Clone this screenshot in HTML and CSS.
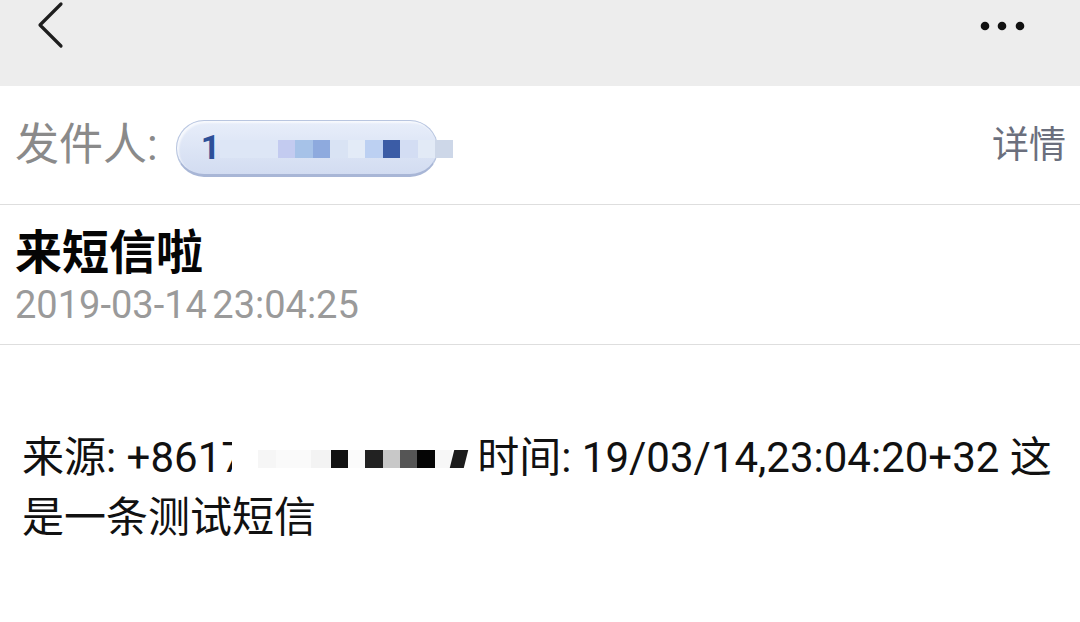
FILE: index.html
```html
<!DOCTYPE html>
<html lang="zh-CN">
<head>
<meta charset="utf-8">
<title>短信</title>
<link rel="stylesheet" href="styles.css">
</head>
<body>
<div class="page">
  <header class="topbar">
    <svg class="back" width="40" height="50" viewBox="0 0 40 50">
      <polyline points="24,4 3,25 24,46" fill="none" stroke="#1e1e1e" stroke-width="3.2" stroke-linecap="round" stroke-linejoin="round"/>
    </svg>
    <svg class="more" width="50" height="12" viewBox="0 0 50 12">
      <circle cx="5" cy="6" r="4.3" fill="#111"/>
      <circle cx="22" cy="6" r="4.3" fill="#111"/>
      <circle cx="40" cy="6" r="4.3" fill="#111"/>
    </svg>
  </header>

  <section class="sender">
    <span class="label">发件人:</span>
    <span class="chip">
      <span class="chip-num">1</span>
      <span class="blur blur-chip">
        <i style="width:58px;background:#dde6f6"></i>
        <i style="width:17px;background:#c3cbf0"></i>
        <i style="width:18px;background:#a6c2e8"></i>
        <i style="width:17px;background:#8eaade"></i>
        <i style="width:18px;background:#d9e3f4"></i>
        <i style="width:17px;background:#e3ebf7"></i>
        <i style="width:18px;background:#bcd0f2"></i>
        <i style="width:17px;background:#3b5ca6"></i>
        <i style="width:18px;background:#d3ddf3"></i>
        <i style="width:17px;background:#e2eaf6"></i>
        <i style="width:18px;background:#cdd7e8"></i>
      </span>
    </span>
    <span class="detail">详情</span>
  </section>

  <section class="subject">
    <h1 class="title">来短信啦</h1>
    <div class="date">2019-03-14 23:04:25</div>
  </section>

  <section class="body">
    <p class="msg">来源: +861<span class="cut">7</span><span class="blur blur-text"><i style="width:26px;background:#fff"></i><i style="width:18px;background:#f6f6f6"></i><i style="width:35px;background:#fafafa"></i><i style="width:20px;background:#f3f3f3"></i><i style="width:17px;background:#111"></i><i style="width:17px;background:#fbfbfb"></i><i style="width:18px;background:#222"></i><i style="width:17px;background:#c8c8c8"></i><i style="width:17px;background:#555"></i><i style="width:18px;background:#050505"></i><i style="width:17px;background:#f7f7f7"></i><i class="slant" style="width:14px;background:#1c1c1c"></i></span>时间: 19/03/14,23:04:20+32 这是一条测试短信</p>
  </section>
</div>
</body>
</html>
```

FILE: styles.css
```css
html, body {
  margin: 0;
  padding: 0;
  background: #ffffff;
}

body {
  width: 1080px;
  height: 622px;
  overflow: hidden;
  font-family: Roboto, "Noto Sans CJK SC", sans-serif;
}

.page {
  display: flex;
  flex-direction: column;
}

.topbar {
  height: 86px;
  background: #ededed;
  display: flex;
  align-items: flex-start;
  justify-content: space-between;
  padding: 0 50px 0 37px;
}

.back {
  display: block;
  margin-top: 0;
}

.more {
  display: block;
  margin-top: 20px;
}

.sender {
  height: 118px;
  border-bottom: 1px solid #dedede;
  display: flex;
  align-items: center;
  padding: 0 14px 0 15px;
}

.label {
  font-size: 44px;
  color: #8a8a8a;
  margin-right: 18px;
  line-height: 1;
}

.chip {
  height: 57px;
  width: 262px;
  box-sizing: border-box;
  border-radius: 28px;
  background: linear-gradient(#e8eefa, #d2dcf1);
  border: 1px solid #b9c6e0;
  border-bottom: 3px solid #a8b6d6;
  box-shadow: inset 2px 2px 2px rgba(255,255,255,0.7);
  display: flex;
  align-items: center;
  padding-left: 24px;
  margin-top: 6px;
}

.chip-num {
  font-weight: 700;
  font-size: 34px;
  color: #2d4f98;
  line-height: 1;
}

.blur {
  display: inline-flex;
  vertical-align: middle;
}

.blur i {
  display: block;
  height: 18px;
}

.blur-chip {
  margin-top: 4px;
}

.cut {
  display: inline-block;
  width: 11px;
  overflow: hidden;
  vertical-align: bottom;
}

.blur-text {
  margin: 0 11px 0 0;
  position: relative;
  top: -2px;
}

.blur-text .slant {
  transform: skewX(-14deg);
}

.detail {
  margin-left: auto;
  font-size: 37px;
  color: #6b6f7d;
  line-height: 1;
}

.subject {
  border-bottom: 1px solid #dedede;
  padding: 20px 15px 15px;
}

.title {
  margin: 0;
  font-size: 47px;
  font-weight: 700;
  color: #050505;
  line-height: 56px;
}

.date {
  font-size: 38px;
  color: #9a9a9a;
  line-height: 48px;
  word-spacing: -4px;
}

.body {
  padding: 83px 22px 0 22px;
}

.msg {
  margin: 0;
  font-size: 42px;
  line-height: 60px;
  color: #111;
}
```
